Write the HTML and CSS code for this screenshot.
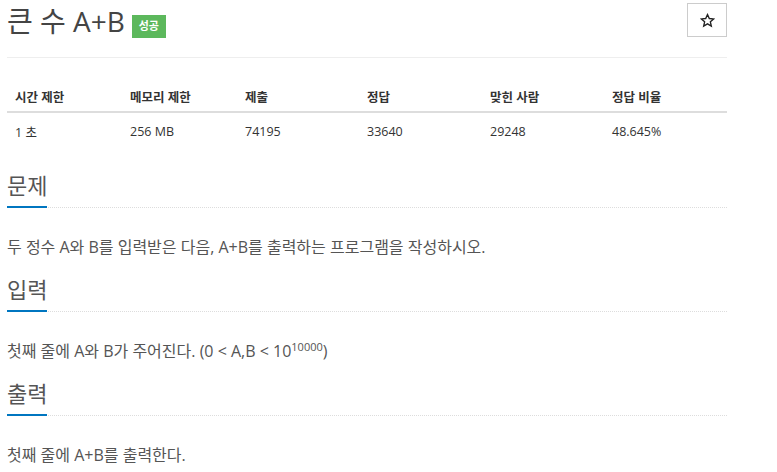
FILE: index.html
```html
<!DOCTYPE html>
<html lang="ko">
<head>
<meta charset="utf-8">
<title>큰 수 A+B</title>
<link rel="stylesheet" href="styles.css">
</head>
<body>
<div class="page">
  <div class="page-header">
    <h1 class="title">큰 수 A+B <span class="badge">성공</span></h1>
    <button class="star-btn" type="button" aria-label="즐겨찾기">
      <svg width="15" height="15" viewBox="0 0 24 24"><path d="M12 2.5l2.9 6.3 6.9.7-5.2 4.6 1.5 6.8L12 17.4l-6.1 3.5 1.5-6.8-5.2-4.6 6.9-.7z" fill="none" stroke="#222" stroke-width="2.2" stroke-linejoin="miter"/></svg>
    </button>
  </div>

  <table class="info">
    <colgroup>
      <col class="c1"><col class="c2"><col class="c3"><col class="c4"><col class="c5"><col class="c6">
    </colgroup>
    <thead>
      <tr>
        <th>시간 제한</th>
        <th>메모리 제한</th>
        <th>제출</th>
        <th>정답</th>
        <th>맞힌 사람</th>
        <th>정답 비율</th>
      </tr>
    </thead>
    <tbody>
      <tr>
        <td>1 초</td>
        <td>256 MB</td>
        <td>74195</td>
        <td>33640</td>
        <td>29248</td>
        <td>48.645%</td>
      </tr>
    </tbody>
  </table>

  <section class="section">
    <h2 class="headline"><span>문제</span></h2>
    <p class="text">두 정수 A와 B를 입력받은 다음, A+B를 출력하는 프로그램을 작성하시오.</p>
  </section>

  <section class="section">
    <h2 class="headline"><span>입력</span></h2>
    <p class="text">첫째 줄에 A와 B가 주어진다. (0 &lt; A,B &lt; 10<sup>10000</sup>)</p>
  </section>

  <section class="section">
    <h2 class="headline"><span>출력</span></h2>
    <p class="text">첫째 줄에 A+B를 출력한다.</p>
  </section>
</div>
</body>
</html>
```

FILE: styles.css
```css
html, body {
  margin: 0;
  padding: 0;
  background: #fff;
}

body {
  font-family: "Open Sans", "Noto Sans CJK KR", sans-serif;
  color: #333;
}

.page {
  width: 720px;
  padding-left: 7px;
}

.page-header {
  display: flex;
  justify-content: space-between;
  align-items: flex-start;
  height: 57px;
  border-bottom: 1px solid #eee;
}

.title {
  margin: 0;
  padding-top: 1px;
  font-size: 28px;
  line-height: 40px;
  font-weight: 400;
  color: #444;
  display: flex;
  align-items: center;
}

.badge {
  display: inline-flex;
  align-items: center;
  justify-content: center;
  width: 34px;
  height: 23px;
  margin-left: 7px;
  margin-top: 10px;
  background: #5cb85c;
  color: #fff;
  font-size: 11px;
  font-weight: 700;
}

.star-btn {
  width: 40px;
  height: 34px;
  margin-top: 3px;
  padding: 0;
  background: #fff;
  border: 1px solid #ccc;
  display: flex;
  align-items: center;
  justify-content: center;
}

.info {
  width: 720px;
  margin-top: 23px;
  border-collapse: collapse;
  table-layout: fixed;
  font-size: 12.5px;
}

.c1 { width: 115px; }
.c2 { width: 115px; }
.c3 { width: 122px; }
.c4 { width: 123px; }
.c5 { width: 122px; }
.c6 { width: 123px; }

.info th, .info td {
  text-align: left;
  padding: 0 0 0 8px;
}

.info th {
  height: 30px;
  font-weight: 700;
  border-bottom: 2px solid #ddd;
  vertical-align: middle;
}

.info td {
  height: 36px;
  vertical-align: middle;
  color: #333;
}

.section {
  margin-top: 21px;
}

.section + .section {
  margin-top: 15px;
}

.headline {
  margin: 0;
  font-size: 22px;
  line-height: 30px;
  font-weight: 400;
  color: #555;
  border-bottom: 1px dotted #ddd;
  display: flex;
}

.headline span {
  display: block;
  width: 40px;
  white-space: nowrap;
  padding-bottom: 6px;
  border-bottom: 2px solid #0076c0;
  margin-bottom: -1px;
}

.text {
  margin: 27px 0 0 0;
  font-size: 16px;
  line-height: 24px;
  color: #555;
}

.text sup {
  font-size: 11px;
  line-height: 0;
  vertical-align: 6px;
}
```
